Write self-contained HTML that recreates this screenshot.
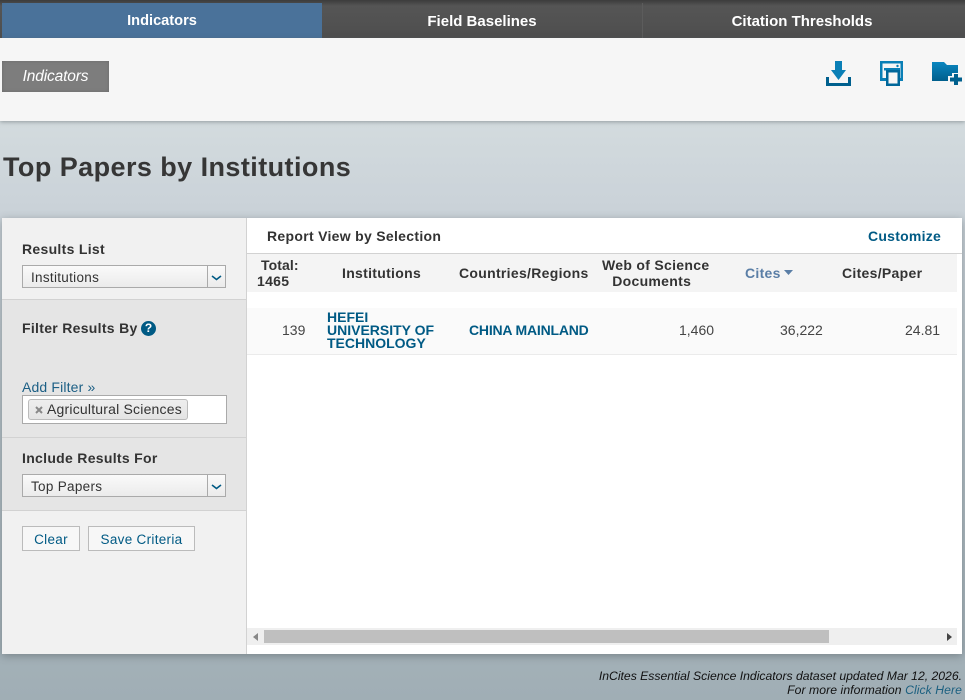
<!DOCTYPE html>
<html>
<head>
<meta charset="utf-8">
<style>
html,body{margin:0;padding:0}
body{width:965px;height:700px;overflow:hidden;position:relative;font-family:"Liberation Sans",sans-serif;background:linear-gradient(#d3dbde 122px,#cbd3d9 200px,#b4c0c6 400px,#a0aeb5 700px);color:#333}
.a{position:absolute;white-space:nowrap}
.tab{position:absolute;top:3px;height:36px;line-height:37px;text-align:center;color:#fff;font-weight:bold;font-size:15px}
.lab{font-weight:bold;font-size:14px;color:#333;letter-spacing:.3px}
.sel{position:absolute;left:22px;width:202px;height:21px;border:1px solid #aaa;background:linear-gradient(#fafafa,#ebebeb);font-size:13.5px;line-height:23px;color:#333;letter-spacing:.3px}
.sel span{position:absolute;left:8px;top:0}
.sel i{position:absolute;right:0;top:0;width:17px;height:21px;border-left:1px solid #aaa}
.sel svg{position:absolute;left:3px;top:9px}
.btn{position:absolute;top:526px;height:23px;border:1px solid #bbb;background:#f7f7f7;color:#005a84;font-size:13.5px;line-height:25px;text-align:center;letter-spacing:.3px}
.th{position:absolute;font-weight:bold;font-size:14px;color:#333;letter-spacing:.3px;white-space:nowrap;text-align:center;line-height:16px}
.td{position:absolute;font-size:14px;color:#444;white-space:nowrap;top:322px;line-height:16px}
.lnk{position:absolute;font-weight:bold;font-size:14px;color:#005a84;line-height:13px}
</style>
</head>
<body>
<div class="a" style="left:0;top:0;width:965px;height:38px;background:linear-gradient(#3c3c3c,#555 6px,#4e4e4e)"></div>
<div class="a" style="left:2px;top:3px;width:320px;height:36px;background:#4a729a"></div>
<div class="a" style="left:642px;top:3px;width:1px;height:35px;background:#5c5c5c"></div>
<div class="tab" style="left:2px;width:320px;font-size:14.6px">Indicators</div>
<div class="tab" style="left:322px;width:320px">Field Baselines</div>
<div class="tab" style="left:642px;width:320px">Citation Thresholds</div>

<div class="a" style="left:0;top:38px;width:965px;height:83px;background:#f6f6f6;box-shadow:0 1px 4px rgba(80,90,95,.5)"></div>
<div class="a" style="left:2px;top:61px;width:107px;height:31px;background:#7d7d7d;box-shadow:inset 0 0 3px #6a6a6a;color:#fff;font-style:italic;font-size:15.5px;line-height:31px;text-align:center;letter-spacing:-.15px">Indicators</div>

<svg class="a" style="left:824px;top:60px" width="30" height="28" viewBox="0 0 30 28"><path fill="#0a7fb6" d="M11 1h7v9h4l-7.500 10L7 10h4z"/><path fill="#00608e" d="M2 17h3v6h19v-6h3v9H2z"/></svg>
<svg class="a" style="left:879px;top:60px" width="26" height="28" viewBox="0 0 26 28"><path fill="#0a7fb6" fill-rule="evenodd" d="M1 1h23v20h-4v-3h1.500V3.500h-18V18H7v3H1z"/><path fill="#0a7fb6" d="M5 8h16v2.500H5z"/><circle cx="18.500" cy="6" r="1.200" fill="#0a7fb6"/><path fill="#00679a" fill-rule="evenodd" d="M7 10h14v16H7zM9.500 12.500v11h9v-11z"/></svg>
<svg class="a" style="left:931px;top:61px" width="34" height="26" viewBox="0 0 34 26"><defs><linearGradient id="f" x1="0" y1="0" x2="0" y2="1"><stop offset="0" stop-color="#0a86c0"/><stop offset="1" stop-color="#005f8c"/></linearGradient></defs><path fill="url(#f)" d="M1 1h12l3 3h11v8h-6v3h-4v5H1z"/><path fill="#00608e" d="M23 13h4v3.500h4v4h-4V24h-4v-3.500h-4v-4h4z"/></svg>

<div class="a" style="left:3px;top:150px;font-size:27px;font-weight:bold;color:#363636;line-height:34px;letter-spacing:.43px">Top Papers by Institutions</div>

<div class="a" style="left:2px;top:218px;width:960px;height:436px;background:#fff;box-shadow:0 2px 8px rgba(70,80,85,.45)"></div>
<div class="a" style="left:2px;top:218px;width:244px;height:436px;background:#f1f1f1;border-right:1px solid #d2d2d2"></div>
<div class="a" style="left:2px;top:299px;width:244px;height:212px;background:#e5e5e5;border-top:1px solid #d2d2d2;border-bottom:1px solid #d2d2d2;box-sizing:border-box"></div>
<div class="a" style="left:2px;top:437px;width:244px;height:1px;background:#d2d2d2"></div>

<div class="a lab" style="left:22px;top:241px">Results List</div>
<div class="sel" style="top:265px"><span>Institutions</span><i><svg width="11" height="6" viewBox="0 0 11 6"><path d="M1 1l4.500 3.500L10 1" fill="none" stroke="#005a84" stroke-width="1.600"/></svg></i></div>

<div class="a lab" style="left:22px;top:320px">Filter Results By</div>
<div class="a" style="left:141px;top:321px;width:15px;height:15px;border-radius:50%;background:#005a84;color:#fff;font-weight:bold;font-size:12px;line-height:15px;text-align:center">?</div>

<div class="a" style="left:22px;top:379px;font-size:14px;color:#1c5f85;letter-spacing:.15px">Add Filter »</div>
<div class="a" style="left:22px;top:395px;width:203px;height:27px;border:1px solid #aaa;background:#fff"></div>
<div class="a" style="left:28px;top:399px;width:158px;height:19px;border:1px solid #bbb;border-radius:3px;background:linear-gradient(#eee,#e4e4e4);font-size:14px;line-height:19px;color:#333;letter-spacing:.2px"><span style="position:absolute;left:18px;top:0">Agricultural Sciences</span><svg style="position:absolute;left:6px;top:6px" width="8" height="8" viewBox="0 0 8 8"><path d="M1 1l6 6M7 1L1 7" stroke="#888" stroke-width="2"/></svg></div>

<div class="a lab" style="left:22px;top:450px">Include Results For</div>
<div class="sel" style="top:474px"><span>Top Papers</span><i><svg width="11" height="6" viewBox="0 0 11 6"><path d="M1 1l4.500 3.500L10 1" fill="none" stroke="#005a84" stroke-width="1.600"/></svg></i></div>

<div class="btn" style="left:22px;width:56px">Clear</div>
<div class="btn" style="left:88px;width:105px">Save Criteria</div>

<div class="a lab" style="left:267px;top:228px">Report View by Selection</div>
<div class="a" style="left:868px;top:228px;font-weight:bold;font-size:14px;color:#005a84;letter-spacing:.25px">Customize</div>
<div class="a" style="left:247px;top:253px;width:715px;height:1px;background:#d2d2d2"></div>
<div class="a" style="left:247px;top:254px;width:710px;height:38px;background:#f4f4f4"></div>
<div class="a" style="left:247px;top:308px;width:710px;height:46px;background:#fafafa;border-bottom:1px solid #ebebeb"></div>

<div class="th" style="left:261px;top:257px;text-align:left;letter-spacing:.1px">Total:</div>
<div class="th" style="left:257px;top:273px;text-align:left">1465</div>
<div class="th" style="left:342px;top:265px">Institutions</div>
<div class="th" style="left:459px;top:265px">Countries/Regions</div>
<div class="th" style="left:602px;top:257px">Web of Science<br><span style="position:relative;left:-4px">Documents</span></div>
<div class="th" style="left:745px;top:265px;color:#5a7ea6">Cites</div>
<svg class="a" style="left:784px;top:270px" width="9" height="5" viewBox="0 0 9 5"><path d="M0 0h9L4.500 5z" fill="#5a7ea6"/></svg>
<div class="th" style="left:842px;top:265px">Cites/Paper</div>

<div class="td" style="left:282px">139</div>
<div class="lnk" style="left:327px;top:311px">HEFEI<br>UNIVERSITY OF<br>TECHNOLOGY</div>
<div class="lnk" style="left:469px;top:324px;letter-spacing:-.2px">CHINA MAINLAND</div>
<div class="td" style="left:679px">1,460</div>
<div class="td" style="left:780px">36,222</div>
<div class="td" style="left:905px">24.81</div>

<div class="a" style="left:247px;top:628px;width:710px;height:17px;background:#efefef"></div>
<div class="a" style="left:264px;top:630px;width:565px;height:13px;background:#bfbfbf"></div>
<svg class="a" style="left:253px;top:633px" width="5" height="8" viewBox="0 0 5 8"><path d="M5 0v8L0 4z" fill="#888"/></svg>
<svg class="a" style="left:947px;top:633px" width="5" height="8" viewBox="0 0 5 8"><path d="M0 0v8l5-4z" fill="#444"/></svg>

<div class="a" style="right:3px;top:669px;font-size:12.2px;font-style:italic;color:#111;line-height:14px;text-align:right">InCites Essential Science Indicators dataset updated Mar 12, 2026.<br><span style="letter-spacing:.07px">For more information <span style="color:#1c6080">Click Here</span></span></div>
</body>
</html>
